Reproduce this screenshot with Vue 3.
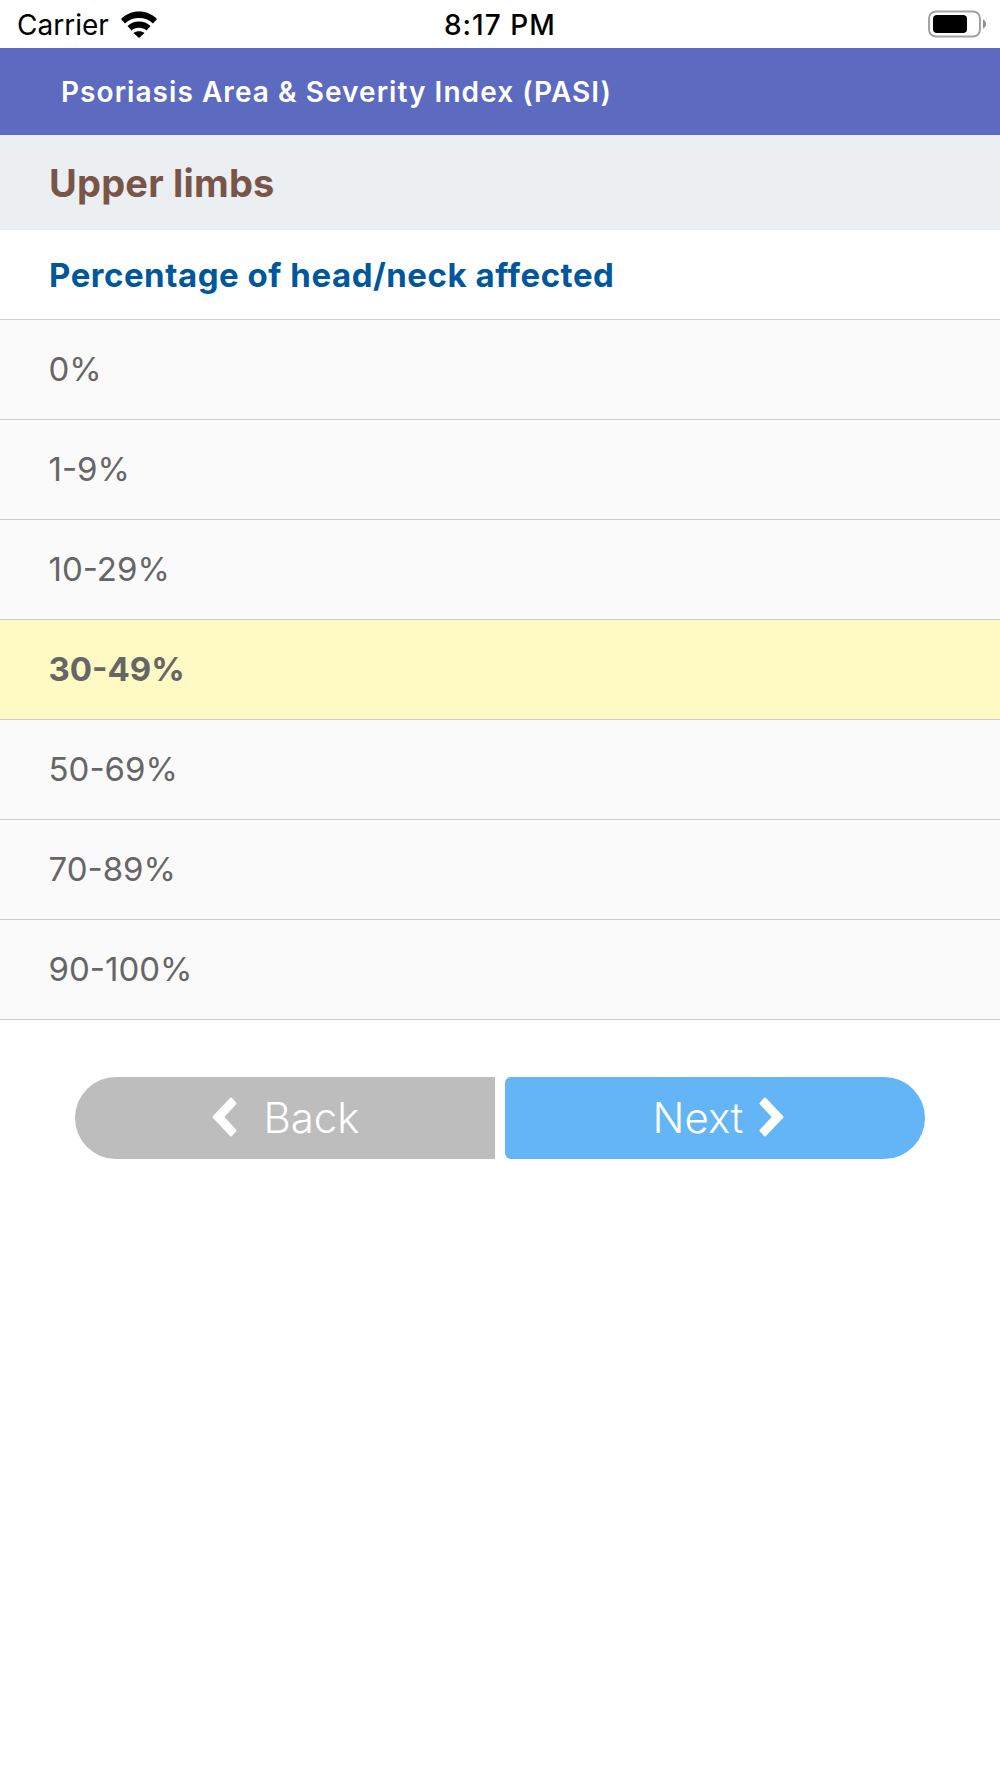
<script setup>
const rows = [
  { label: '0%' },
  { label: '1-9%' },
  { label: '10-29%' },
  { label: '30-49%', selected: true },
  { label: '50-69%' },
  { label: '70-89%' },
  { label: '90-100%' },
]
</script>

<template>
  <div class="screen">
    <div class="status">
      <div class="status-left">
        <span class="carrier">Carrier</span>
        <svg class="wifi" width="38" height="28" viewBox="0 0 38 28">
          <path d="M1 9C6 4 12 1.500 19 1.500S32 4 37 9L33 13.500C29 9.800 24.500 8 19 8S9 9.800 5 13.500Z" fill="#000"/>
          <path d="M7.500 16C11 12.800 14.500 11.500 19 11.500S27 12.800 30.500 16L26.500 20.500C24.500 18.800 22 17.800 19 17.800S13.500 18.800 11.500 20.500Z" fill="#000"/>
          <path d="M13.500 23C15 21.800 17 21.200 19 21.200S23 21.800 24.500 23L19 28Z" fill="#000"/>
        </svg>
      </div>
      <span class="time">8:17 PM</span>
      <svg class="battery" width="58" height="28" viewBox="0 0 58 28">
        <rect x="1" y="1.500" width="51" height="25" rx="7" fill="none" stroke="#a3a3a3" stroke-width="2"/>
        <rect x="5" y="5" width="34" height="18" rx="4" fill="#000"/>
        <path d="M55 9.500C57 10.500 58 12 58 14S57 17.500 55 18.500Z" fill="#8e8e8e"/>
      </svg>
    </div>

    <header class="navbar">Psoriasis Area &amp; Severity Index (PASI)</header>
    <div class="section">Upper limbs</div>
    <div class="question">Percentage of head/neck affected</div>

    <ul class="options">
      <li v-for="r in rows" :key="r.label" class="option" :class="{ selected: r.selected }">{{ r.label }}</li>
    </ul>

    <div class="actions">
      <button class="btn back">
        <svg width="25" height="40" viewBox="0 0 25 40"><path d="M1.500 20L19 1.500L23.500 6.500L11 20L23.500 33.500L19 38.500Z" fill="#fff" stroke="#fff" stroke-width="2" stroke-linejoin="round"/></svg>
        <span>Back</span>
      </button>
      <button class="btn next">
        <span>Next</span>
        <svg width="25" height="40" viewBox="0 0 25 40"><path d="M23.500 20L6 1.500L1.500 6.500L14 20L1.500 33.500L6 38.500Z" fill="#fff" stroke="#fff" stroke-width="2" stroke-linejoin="round"/></svg>
      </button>
    </div>
  </div>
</template>

<style>
html, body { margin: 0; background: #fff; }
</style>

<style scoped>
.screen {
  width: 1000px;
  height: 1778px;
  background: #fff;
  font-family: Inter, "Liberation Sans", sans-serif;
  overflow: hidden;
}
.status {
  height: 48px;
  box-sizing: border-box;
  padding: 0 14px 0 17px;
  display: flex;
  align-items: center;
  justify-content: space-between;
  position: relative;
  color: #000;
}
.status-left { display: flex; align-items: center; gap: 11px; }
.carrier { font-size: 28px; padding-top: 1px; }
.wifi { display: block; }
.time {
  position: absolute;
  left: 444px;
  font-size: 28px;
  font-weight: 500;
  letter-spacing: 1px;
  padding-top: 1px;
}
.battery { display: block; }
.navbar {
  height: 87px;
  background: #5c6bc0;
  color: #fff;
  font-size: 28px;
  font-weight: 600;
  letter-spacing: 1.05px;
  padding-left: 61px;
  display: flex;
  align-items: center;
}
.section {
  height: 95px;
  background: #eceff1;
  color: #795548;
  font-size: 38px;
  font-weight: 700;
  letter-spacing: 0.2px;
  padding-left: 49px;
  display: flex;
  align-items: center;
}
.question {
  height: 89px;
  color: #01579b;
  font-size: 33px;
  font-weight: 700;
  letter-spacing: 0.53px;
  padding-left: 49px;
  display: flex;
  align-items: center;
  border-bottom: 2px solid #d2d2d2;
}
.options { list-style: none; margin: -1px 0 0; padding: 0; }
.option {
  height: 100px;
  box-sizing: border-box;
  background: #fafafa;
  border-bottom: 1px solid #cccccc;
  color: #666666;
  font-size: 33px;
  padding: 0 0 1px 48.500px;
  display: flex;
  align-items: center;
}
.option.selected { background: #fff9c4; font-weight: 700; }
.actions {
  margin-top: 57px;
  padding: 0 75px;
  display: flex;
  gap: 10px;
}
.btn {
  flex: none;
  width: 420px;
  height: 82px;
  border: 0;
  color: #fff;
  font: 300 42px Inter, "Liberation Sans", sans-serif;
  display: flex;
  align-items: center;
  justify-content: center;
  padding: 0 0 2px;
}
.back { background: #bdbdbd; border-radius: 41px 0 0 41px; gap: 26px; padding-left: 2px; }
.next { background: #64b5f6; border-radius: 6px 41px 41px 6px; gap: 16px; padding-left: 7px; }
</style>
